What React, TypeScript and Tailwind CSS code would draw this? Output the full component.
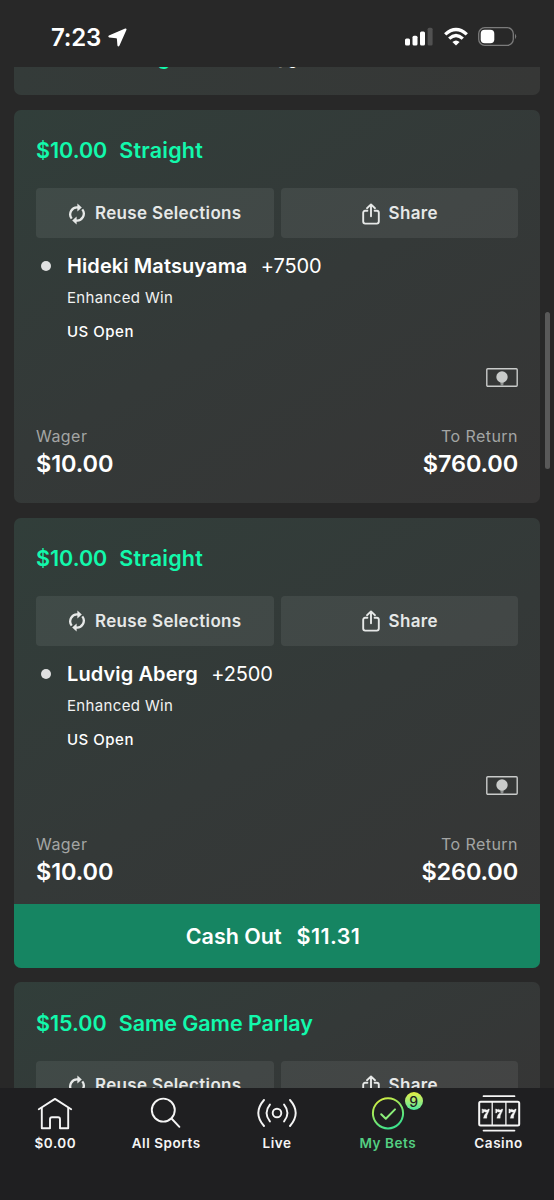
import React from "react";

type Bet = {
  stake: string;
  type: string;
  player?: string;
  odds?: string;
  toReturn?: string;
  cashOut?: string;
};

const bets: Bet[] = [
  { stake: "$10.00", type: "Straight", player: "Hideki Matsuyama", odds: "+7500", toReturn: "$760.00" },
  { stake: "$10.00", type: "Straight", player: "Ludvig Aberg", odds: "+2500", toReturn: "$260.00", cashOut: "$11.31" },
  { stake: "$15.00", type: "Same Game Parlay" },
];

const ReuseIcon = () => (
  <svg width="18" height="22" viewBox="0 0 18 22" fill="none" stroke="#e6e8e7" strokeWidth="2.3">
    <path d="M3.7 15.6A6.9 6.9 0 0 1 10 4.5" />
    <path d="M9.4 0.4L13.8 4.4L9.4 8.6Z" fill="#e6e8e7" stroke="none" />
    <path d="M14.3 6.4A6.9 6.9 0 0 1 8 17.5" />
    <path d="M8.6 21.6L4.2 17.6L8.6 13.4Z" fill="#e6e8e7" stroke="none" />
  </svg>
);

const ShareIcon = () => (
  <svg width="18" height="22" viewBox="0 0 18 22" fill="none" stroke="#e6e8e7" strokeWidth="1.9" strokeLinecap="round" strokeLinejoin="round">
    <path d="M5.4 7.8H3.2Q1.2 7.8 1.2 9.8V18.6Q1.2 20.6 3.2 20.6H14.8Q16.8 20.6 16.8 18.6V9.8Q16.8 7.8 14.8 7.8H12.6" />
    <path d="M9 13.2V1.6M5 5.2L9 1.4L13 5.2" />
  </svg>
);

const CashIcon = () => (
  <svg width="32" height="19" viewBox="0 0 32 19" fill="none">
    <rect x="0.8" y="0.8" width="30.4" height="17.4" rx="1" stroke="#c9cbca" strokeWidth="1.4" />
    <path d="M14 12H18L17.2 18H14.8Z" fill="#8d908f" />
    <circle cx="16" cy="9" r="5.7" fill="#c9cbca" />
  </svg>
);

const HomeIcon = () => (
  <svg width="36" height="34" viewBox="0 0 36 34" fill="none" stroke="#f5f5f5" strokeWidth="1.9" strokeLinecap="round" strokeLinejoin="round">
    <path d="M1.8 12.2L18 1.9L34.2 12.2" />
    <path d="M4.8 11V31.2H13V22.2Q13 20.2 15 20.2H21Q23 20.2 23 22.2V31.2H31.2V11" />
  </svg>
);

const SearchIcon = () => (
  <svg width="36" height="34" viewBox="0 0 36 34" fill="none" stroke="#f5f5f5" strokeWidth="1.9" strokeLinecap="round">
    <circle cx="15.3" cy="13.1" r="11.5" />
    <path d="M23.5 21.5L31.4 29.8" />
  </svg>
);

const LiveIcon = () => (
  <svg width="40" height="34" viewBox="0 0 40 34" fill="none" stroke="#f5f5f5" strokeWidth="1.9" strokeLinecap="round">
    <circle cx="20" cy="16" r="4.3" />
    <path d="M12.9 7.6Q6.2 16 12.9 24.4M7 3Q-4.4 16 7 29M27.1 7.6Q33.8 16 27.1 24.4M33 3Q44.4 16 33 29" />
  </svg>
);

const MyBetsIcon = () => (
  <svg width="36" height="34" viewBox="0 0 36 34" fill="none" strokeWidth="2" strokeLinecap="round" strokeLinejoin="round">
    <defs>
      <linearGradient id="bets" x1="0" y1="0" x2="0.5" y2="1">
        <stop offset="0" stopColor="#e3ef3a" />
        <stop offset="1" stopColor="#3fe28c" />
      </linearGradient>
    </defs>
    <circle cx="18" cy="16.3" r="15.1" stroke="url(#bets)" />
    <path d="M11.2 17.2L15.8 21.8L25 12.4" stroke="#8cf07a" />
  </svg>
);

const CasinoIcon = () => (
  <svg width="44" height="38" viewBox="0 0 44 38" fill="none" stroke="#f5f5f5" strokeWidth="1.7" strokeLinecap="round">
    <path d="M6.5 1.2H37.5M6.5 35.6H37.5" />
    <rect x="2.2" y="6.8" width="40" height="23.6" rx="1.5" strokeWidth="2" />
    <path d="M15.2 7V30M28.9 7V30" strokeWidth="1.3" />
    {[5.2, 18.6, 32].map((x) => (
      <path
        key={x}
        transform={`translate(${x} 14)`}
        d="M0 0H1.1L1.5 0.8Q2.5-0.4 4 0.7Q5.4 1.4 6 0H7.2Q7.1 2.6 5.5 4.8Q4.4 6.5 4.6 9.2H1.2Q1.4 6 4.8 3Q3 3.5 1.8 2.5L1.1 4H0Z"
        fill="#f5f5f5"
        stroke="#f5f5f5"
        strokeWidth="0.3"
      />
    ))}
  </svg>
);

const StatusBar = () => (
  <div className="flex h-[67px] shrink-0 items-start justify-between pt-[23px] pr-[37px] pl-[51px]">
    <div className="mt-px flex items-center gap-[7px]">
      <span className="text-[24px] leading-[28px] font-semibold tracking-[-0.2px] text-white">7:23</span>
      <svg width="19" height="19" viewBox="0 0 19 19" fill="#fff" className="-mt-px">
        <path d="M17.2 0.5L0.9 7.4Q-0.4 8.8 1.2 9.5L8.2 10.2Q8.8 10.2 8.9 10.8L9.4 17.6Q10.2 19.3 11.4 17.8L18.5 1.8Q18.7 0.2 17.2 0.5Z" />
      </svg>
    </div>
    <div className="mt-[4px] flex items-center gap-[10.5px]">
      <svg width="28" height="19" viewBox="0 0 28 19" fill="#fff">
        <rect x="0" y="11.5" width="5" height="7" rx="1.5" />
        <rect x="7.5" y="8.7" width="5" height="9.8" rx="1.5" />
        <rect x="15" y="4.5" width="5" height="14" rx="1.5" />
        <rect x="22.6" y="0.7" width="5" height="17.8" rx="1.5" fill="#515151" />
      </svg>
      <svg width="24" height="19" viewBox="0 0 24 19" fill="none" stroke="#fff" strokeWidth="3.3">
        <path d="M1.2 7.4Q12 -2.4 22.8 7.4" />
        <path d="M5.2 11.6Q12 5.4 18.8 11.6" />
        <path d="M12 18.6L8.4 15Q12 11.8 15.6 15Z" fill="#fff" stroke="none" />
      </svg>
      <svg width="39" height="19" viewBox="0 0 39 19" fill="none">
        <rect x="0.7" y="0.7" width="34.6" height="17.6" rx="6" stroke="#7b7b7b" strokeWidth="1.3" />
        <rect x="2.7" y="2.7" width="13.6" height="13.6" rx="4" fill="#fff" />
        <path d="M37 6.8Q39.4 9.5 37 12.2Z" fill="#7b7b7b" />
      </svg>
    </div>
  </div>
);

const BetCard = ({ bet }: { bet: Bet }) => (
  <div className="shrink-0 overflow-hidden rounded-[7px] bg-linear-[150deg] from-[#313e3a] via-[#343938] to-[#363535]">
    <div className={bet.cashOut ? "px-[22px] pb-[16.5px]" : "px-[22px] pb-[23px]"}>
      <div className="flex gap-[12px] pt-[26.5px] text-[21.5px] leading-[28px] font-semibold text-[#12f9ac]">
        <span>{bet.stake}</span>
        <span className={bet.type === "Straight" ? "tracking-[0.2px]" : "tracking-[-0.05px]"}>{bet.type}</span>
      </div>
      <div className="mt-[24px] grid grid-cols-2 gap-[7px] text-[17px] font-semibold tracking-[0.34px] text-[#e6e8e7]">
        <button className="flex h-[49.5px] items-center justify-center gap-[9px] rounded-[4px] bg-white/7 pt-px">
          <ReuseIcon />
          Reuse Selections
        </button>
        <button className="flex h-[49.5px] items-center justify-center gap-[9px] rounded-[4px] bg-white/7 pt-px pl-px">
          <ShareIcon />
          Share
        </button>
      </div>
      {bet.player && (
        <>
          <div className="mt-[14.5px] flex items-center text-[20px] leading-[28px] text-white">
            <span className="ml-[5px] h-[10px] w-[10px] rounded-full bg-[#e0e1e1]" />
            <span className="ml-[16px] font-semibold tracking-[0.1px]">{bet.player}</span>
            <span className="ml-[13.5px] tracking-[-0.15px]">{bet.odds}</span>
          </div>
          <div className="mt-[8px] ml-[31px] text-[15px] leading-[20px] tracking-[0.35px] text-[#f1f2f2]">Enhanced Win</div>
          <div className="mt-[14px] ml-[31px] text-[15px] leading-[20px] font-medium tracking-[0.5px] text-white">US Open</div>
          <div className="mt-[25.5px] flex justify-end">
            <CashIcon />
          </div>
          <div className="mt-[38.3px] flex justify-between text-[#a3a5a4]">
            <div>
              <div className="text-[16px] leading-[22px] tracking-[0.45px]">Wager</div>
              <div className="text-[23.5px] leading-[33px] font-semibold tracking-[-0.1px] text-white">{bet.stake}</div>
            </div>
            <div className="text-right">
              <div className="text-[16px] leading-[22px] tracking-[0.45px]">To Return</div>
              <div className="text-[23.5px] leading-[33px] font-semibold tracking-[-0.15px] text-white">{bet.toReturn}</div>
            </div>
          </div>
        </>
      )}
    </div>
    {bet.cashOut && (
      <button className="flex h-[63.5px] w-full items-center justify-center gap-[15px] bg-[#168562] pr-[8px] text-[21.5px] font-semibold text-white">
        <span>Cash Out</span>
        <span className="tracking-[0.4px]">{bet.cashOut}</span>
      </button>
    )}
  </div>
);

const NavItem = ({ label, active, children }: { label: string; active?: boolean; children: React.ReactNode }) => (
  <div className={active ? "flex flex-1 flex-col items-center pt-[7.5px] text-[#54cf82]" : "flex flex-1 flex-col items-center pt-[7.5px] text-[#f5f5f5]"}>
    <div className="relative flex h-[38px] items-center justify-center">{children}</div>
    <span className="text-[13.5px] leading-[21px] font-semibold tracking-[0.55px]">{label}</span>
  </div>
);

const App = () => {
  return (
    <div className="relative flex h-[1200px] w-[554px] flex-col overflow-hidden bg-[#282828] font-['Inter',sans-serif]">
      <StatusBar />
      <main className="flex min-h-0 flex-1 flex-col gap-[14.5px] overflow-hidden px-[14px]">
        {/* card scrolled almost out of view */}
        <div className="h-[28.3px] shrink-0 overflow-hidden rounded-b-[7px] bg-linear-to-r from-[#343b39] to-[#363736]">
          <div className="-mt-[22px] flex items-end leading-[26px]">
            <span className="ml-[99px] w-[150px] text-[20px] font-semibold text-[#12f9ac]">Straight</span>
            <span className="ml-[15px] text-[17px] leading-[25px] text-white">yg</span>
          </div>
        </div>
        {bets.map((bet, i) => (
          <BetCard key={i} bet={bet} />
        ))}
      </main>
      <nav className="flex h-[112.5px] shrink-0 bg-[#1f1f21]">
        <NavItem label="$0.00"><HomeIcon /></NavItem>
        <NavItem label="All Sports"><SearchIcon /></NavItem>
        <NavItem label="Live"><LiveIcon /></NavItem>
        <NavItem label="My Bets" active>
          <MyBetsIcon />
          <span className="absolute -top-[3px] left-[35px] flex h-[18px] w-[18px] items-center justify-center rounded-full bg-linear-to-b from-[#e3ef3a] to-[#3fe89a] text-[14px] font-medium text-[#1f1f21]">9</span>
        </NavItem>
        <NavItem label="Casino"><CasinoIcon /></NavItem>
      </nav>
      {/* scroll indicator */}
      <div className="absolute top-[312px] right-[4px] h-[157px] w-[5px] rounded-full bg-[#595959]" />
    </div>
  );
};

export default App;
